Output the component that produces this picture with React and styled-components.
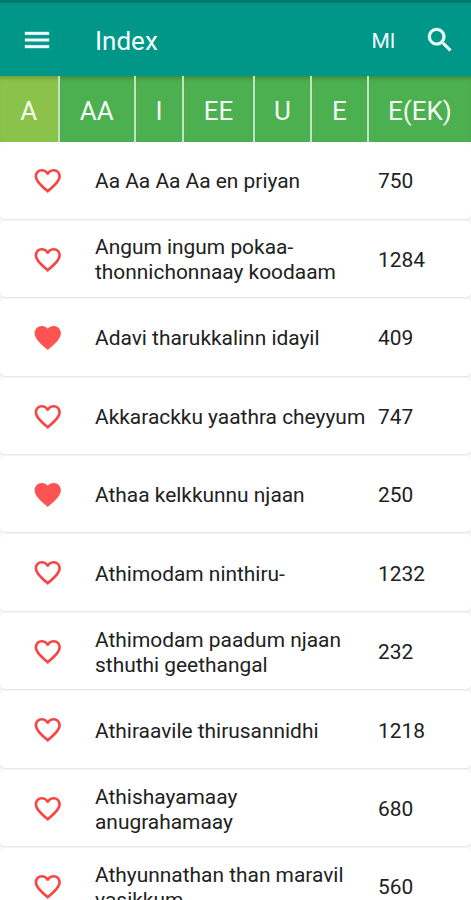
import React, { Component } from "react";
import styled, { createGlobalStyle } from "styled-components";
import {
  MdFavorite,
  MdFavoriteBorder,
  MdMenu,
  MdSearch,
} from "react-icons/md";

const GlobalStyle = createGlobalStyle`
  body {
    margin: 0;
    background: #fff;
    font-family: Roboto, "Liberation Sans", sans-serif;
  }
`;

const Screen = styled.div`
  display: flex;
  flex-direction: column;
  width: 471px;
  height: 900px;
  overflow: hidden;
  background: #fff;
`;

const Toolbar = styled.header`
  display: flex;
  align-items: center;
  flex: none;
  box-sizing: border-box;
  height: 76px;
  padding: 2px 15px 0 21px;
  border-top: 3px solid #00796b;
  background: #009688;
  color: #f2fffd;
`;

const IconButton = styled.button`
  display: flex;
  padding: 0 0 2px;
  border: 0;
  background: none;
  color: inherit;
  font-size: ${(props) => props.$size}px;

  /* the icons carry an empty bounding path, which stays unstroked */
  path:not([fill="none"]) {
    stroke: currentColor;
    stroke-width: ${(props) => props.$stroke};
  }

  path[fill="none"] {
    stroke: none;
  }
`;

const Title = styled.h1`
  flex: 1;
  margin: 0 0 0 42px;
  font-size: 26px;
  font-weight: 400;
  line-height: 30px;
`;

const Language = styled.span`
  margin-right: 29px;
  font-size: 21px;
  line-height: 26px;
`;

const Tabs = styled.nav`
  display: flex;
  flex: none;
  height: 65.5px;
  background: #4caf50;
`;

const Tab = styled.button`
  display: flex;
  align-items: center;
  justify-content: center;
  flex: none;
  box-sizing: border-box;
  width: ${(props) => props.$width}px;
  padding: 4px 0 0;
  border: 0;
  border-right: 2px solid #c3e4c4;
  background: ${(props) => (props.$active ? "#8bc34a" : "transparent")};
  box-shadow: inset 0 5px 4px -3px rgba(0, 0, 0, 0.22);
  color: #f2fbf0;
  font-family: inherit;
  font-size: 26px;

  &:last-child {
    border-right: 0;
  }
`;

const List = styled.ul`
  flex: 1;
  margin: 0;
  padding: 0.7px 0 0;
  overflow: hidden;
  background: #f6f6f6;
  list-style: none;
`;

const Song = styled.li`
  display: grid;
  grid-template-columns: 95px 283px 1fr;
  align-items: center;
  box-sizing: border-box;
  height: 76.46px;
  margin-bottom: 2px;
  border-radius: 5px;
  background: #fff;
  box-shadow: 0 1px 1px rgba(0, 0, 0, 0.07);
  color: #212121;
  font-size: 20.92px;
  line-height: 25px;
`;

const Heart = styled.span`
  display: flex;
  justify-content: center;
  padding-top: 1px;
  color: ${(props) => (props.$filled ? "#ff5252" : "#f94444")};
  font-size: 31.5px;
`;

const Name = styled.span`
  padding-top: 3px;
  white-space: pre-line;
`;

const Num = styled.span`
  padding-top: 3px;
`;

const tabs = [
  { label: "A", width: 59.5 },
  { label: "AA", width: 76.5 },
  { label: "I", width: 48 },
  { label: "EE", width: 71 },
  { label: "U", width: 57 },
  { label: "E", width: 57 },
  { label: "E(EK)", width: 102 },
];

const songs = [
  { name: "Aa Aa Aa Aa en priyan", number: 750 },
  { name: "Angum ingum pokaa-\nthonnichonnaay koodaam", number: 1284 },
  { name: "Adavi tharukkalinn idayil", number: 409, favorite: true },
  { name: "Akkarackku yaathra cheyyum", number: 747 },
  { name: "Athaa kelkkunnu njaan", number: 250, favorite: true },
  { name: "Athimodam ninthiru-", number: 1232 },
  { name: "Athimodam paadum njaan\nsthuthi geethangal", number: 232 },
  { name: "Athiraavile thirusannidhi", number: 1218 },
  { name: "Athishayamaay\nanugrahamaay", number: 680 },
  { name: "Athyunnathan than maravil\nvasikkum", number: 560 },
];

export default class App extends Component {
  state = { active: "A" };

  render() {
    return (
      <Screen>
        <GlobalStyle />
        <Toolbar>
          <IconButton $size={32} $stroke={0.3} aria-label="Menu">
            <MdMenu />
          </IconButton>
          <Title>Index</Title>
          <Language>Ml</Language>
          <IconButton $size={32} $stroke={0.4} aria-label="Search">
            <MdSearch />
          </IconButton>
        </Toolbar>
        <Tabs>
          {tabs.map((tab) => (
            <Tab
              key={tab.label}
              $width={tab.width}
              $active={this.state.active === tab.label}
              onClick={() => this.setState({ active: tab.label })}
            >
              {tab.label}
            </Tab>
          ))}
        </Tabs>
        <List>
          {songs.map((song) => (
            <Song key={song.number}>
              <Heart $filled={song.favorite}>
                {song.favorite ? <MdFavorite /> : <MdFavoriteBorder />}
              </Heart>
              <Name>{song.name}</Name>
              <Num>{song.number}</Num>
            </Song>
          ))}
        </List>
      </Screen>
    );
  }
}
